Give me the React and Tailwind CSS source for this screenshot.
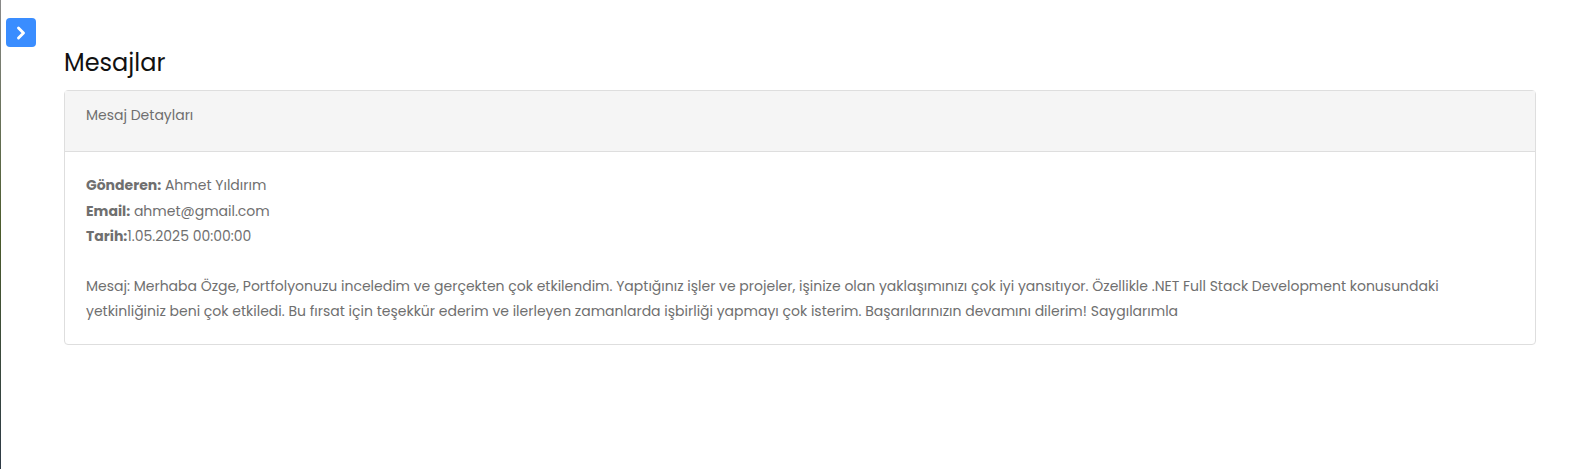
import { ChevronRight } from "lucide-react";

export default function App() {
  return (
    <div className="relative flex min-h-[469px] bg-white font-['Poppins','Inter',sans-serif] text-[#6f6f6f]">
      <div className="w-px shrink-0 bg-gradient-to-b from-[#8a8a8a] via-[#4a5a2a] to-[#2e3a46]" />
      <button
        type="button"
        className="absolute left-[6px] top-[18px] flex h-[29px] w-[30px] items-center justify-center rounded-[4px] bg-[#3a8dff] text-white"
      >
        <ChevronRight size={20} strokeWidth={3.5} />
      </button>
      <main className="flex-1 pl-[63px] pr-[40px] pt-[46px]">
        <h1 className="mb-[10px] text-[24px] leading-[34px] text-[#111]">Mesajlar</h1>
        <section className="rounded-[4px] border border-[#dedede]">
          <div className="h-[61px] border-b border-[#dedede] bg-[#f5f5f5] px-[21px] pt-[14px] text-[14px] leading-[21px]">
            Mesaj Detayları
          </div>
          <div className="px-[21px] pb-[19px] pt-[21px] text-[14px] leading-[25.5px]">
            <p>
              <b className="font-bold">Gönderen:</b> Ahmet Yıldırım
            </p>
            <p>
              <b className="font-bold">Email:</b> ahmet@gmail.com
            </p>
            <p>
              <b className="font-bold">Tarih:</b>1.05.2025 00:00:00
            </p>
            <p className="mt-[24px] leading-[25.5px]">
              Mesaj: Merhaba Özge, Portfolyonuzu inceledim ve gerçekten çok etkilendim. Yaptığınız işler ve projeler, işinize olan yaklaşımınızı çok iyi yansıtıyor. Özellikle .NET Full Stack Development konusundaki yetkinliğiniz beni çok etkiledi. Bu fırsat için teşekkür ederim ve ilerleyen zamanlarda işbirliği yapmayı çok isterim. Başarılarınızın devamını dilerim! Saygılarımla
            </p>
          </div>
        </section>
      </main>
    </div>
  );
}
